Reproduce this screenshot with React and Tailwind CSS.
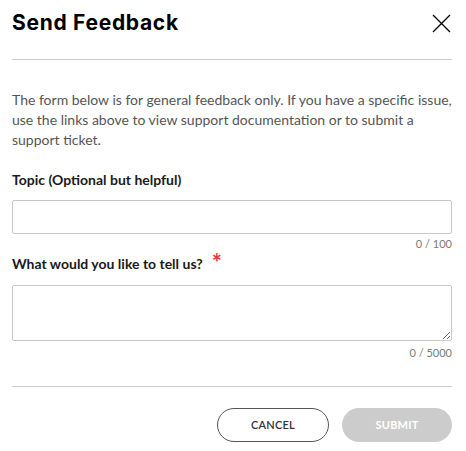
import { useState } from 'react';

export default function App() {
  const [topic, setTopic] = useState('');
  const [message, setMessage] = useState('');

  return (
    <div className="w-[466px] h-[451px] bg-white pl-3 pr-[14px] font-['Lato','Liberation_Sans',sans-serif] text-[#1c1c1c]">
      {/* Header */}
      <div className="flex items-center justify-between h-[45px] pt-[1px]">
        <h1 className="font-['Inter',sans-serif] text-[21px] font-bold tracking-[0.7px] text-black">Send Feedback</h1>
        <button className="w-[20px] h-[20px] mr-[1px] flex items-center justify-center text-black">
          <svg width="19" height="19" viewBox="0 0 19 19" fill="none" stroke="currentColor" strokeWidth="1.3">
            <path d="M1 1L18 18M18 1L1 18" />
          </svg>
        </button>
      </div>
      <div className="mt-[14px] h-px bg-[#cccccc]" />

      {/* Intro */}
      <p className="mt-[30px] text-[14px] leading-[20px] text-[#555555]">
        The form below is for general feedback only. If you have a specific issue, use the links above to view support documentation or to submit a support ticket.
      </p>

      {/* Topic */}
      <label className="block mt-[20px] text-[14px] leading-[20px] font-bold text-[#1a1a1a]">Topic (Optional but helpful)</label>
      <input
        value={topic}
        onChange={(e) => setTopic(e.target.value)}
        maxLength={100}
        className="mt-[10px] block w-full h-[34px] border border-[#c8c8c8] rounded-[2px] px-2 text-[14px] outline-none"
      />
      <div className="mt-[3px] text-right text-[11px] leading-[14px] text-[#7a7a7a]">{topic.length} / 100</div>

      {/* Message */}
      <label className="flex items-start h-[20px] mt-[3px] text-[14px] leading-[20px] font-bold text-[#1a1a1a]">
        What would you like to tell us?
        <span className="ml-[9px] h-[20px] -mt-[3px] text-[24px] leading-[24px] text-[#f4333d] font-bold">*</span>
      </label>
      <textarea
        value={message}
        onChange={(e) => setMessage(e.target.value)}
        maxLength={5000}
        className="mt-[11px] block w-full h-[56px] border border-[#c8c8c8] rounded-[2px] px-2 py-1 text-[14px] outline-none"
      />
      <div className="mt-[5px] text-right text-[11px] leading-[14px] text-[#7a7a7a]">{message.length} / 5000</div>

      <div className="mt-[26px] h-px bg-[#cccccc]" />

      {/* Actions */}
      <div className="mt-[21px] flex justify-end gap-[13px]">
        <button className="w-[112px] h-[34px] rounded-full border border-[#555555] text-[11px] font-semibold text-[#333333] tracking-[0.2px]">
          CANCEL
        </button>
        <button disabled className="w-[110px] h-[34px] rounded-full bg-[#cccccc] text-[11px] font-bold text-white tracking-[0.2px]">
          SUBMIT
        </button>
      </div>
    </div>
  );
}
